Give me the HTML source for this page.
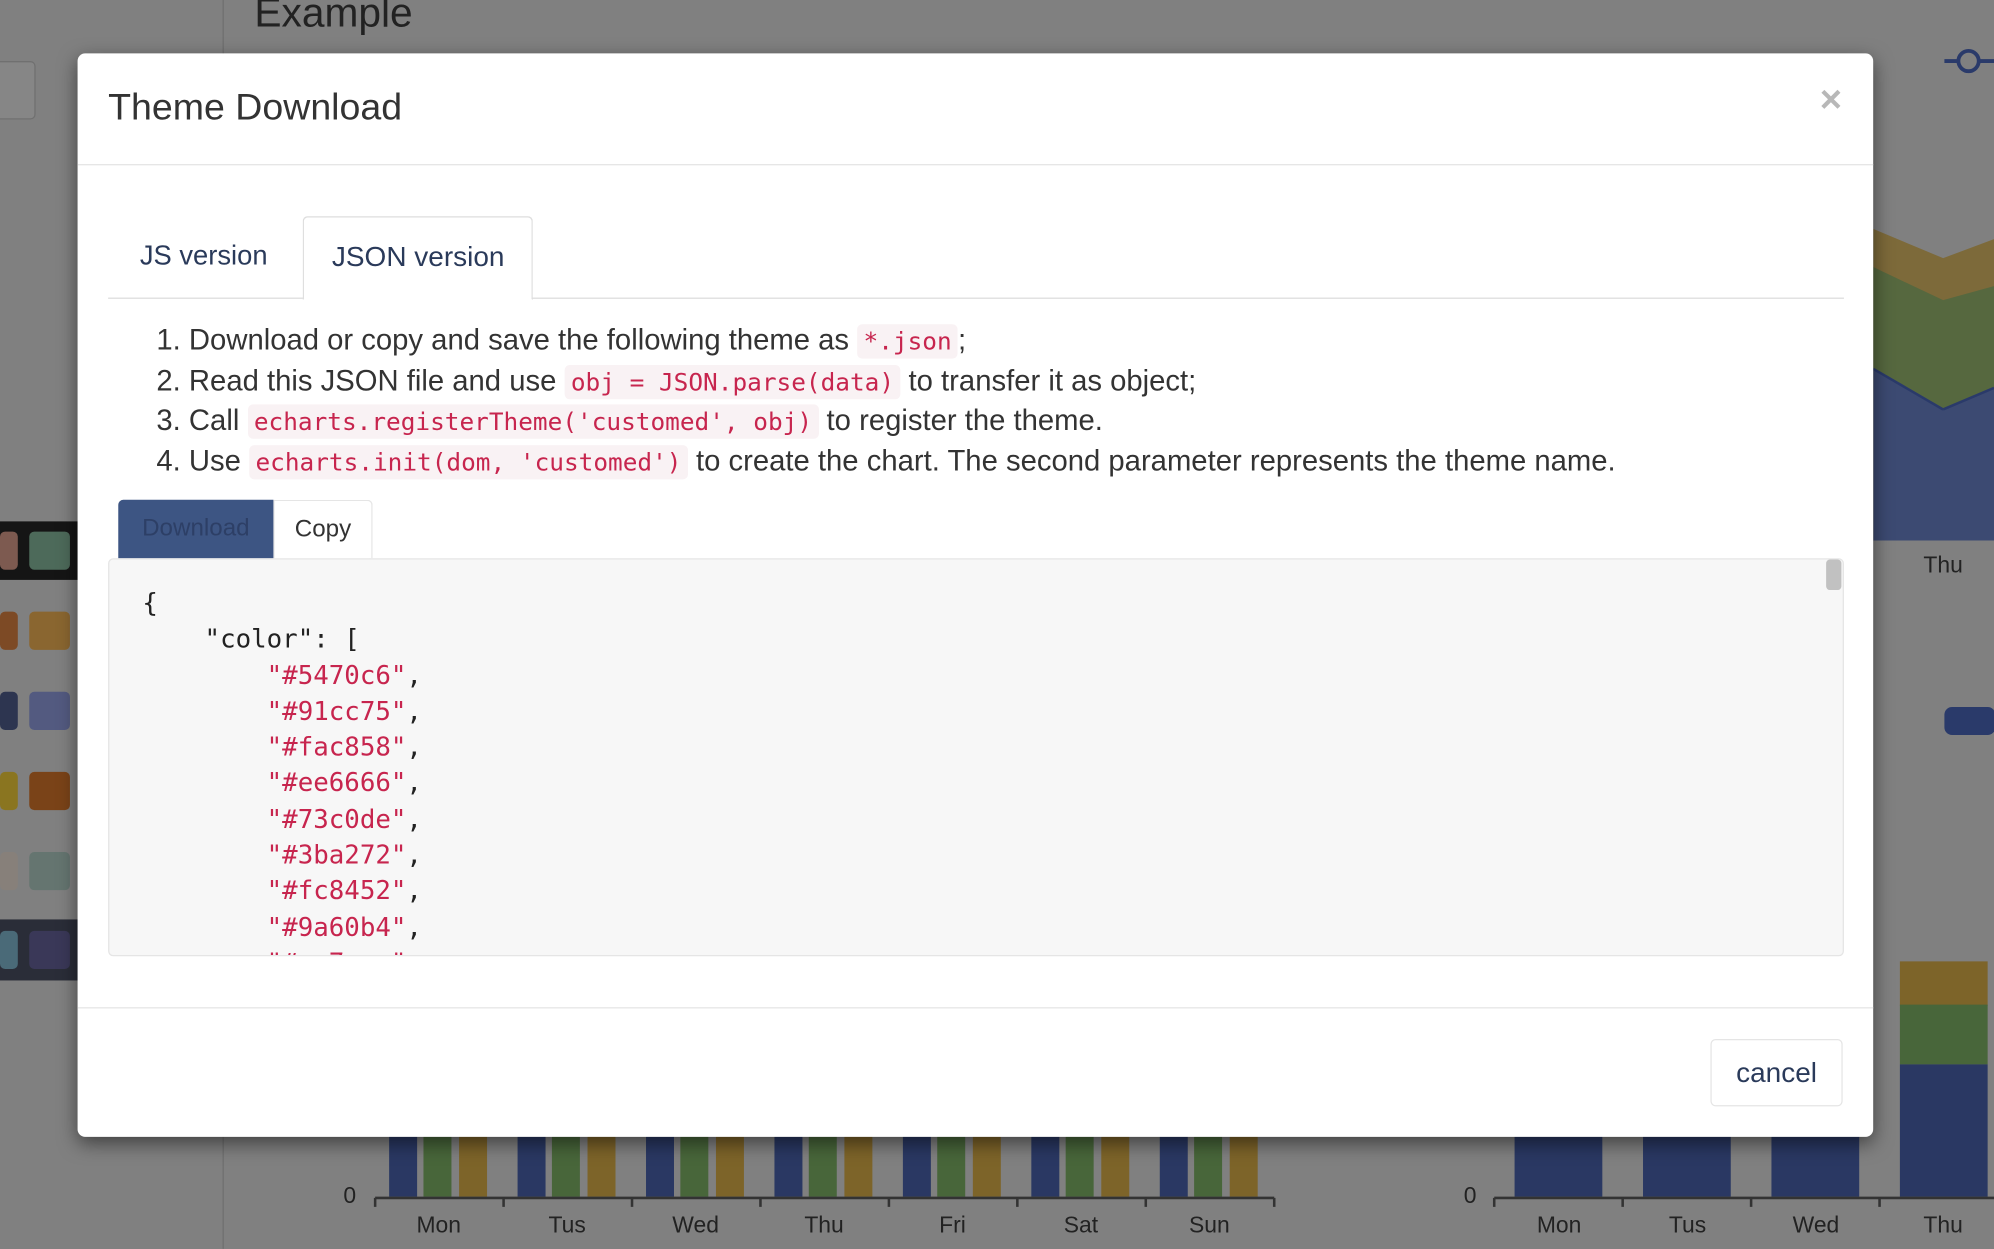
<!DOCTYPE html>
<html><head><meta charset="utf-8"><style>
*{box-sizing:border-box;margin:0;padding:0}
html,body{width:1994px;height:1248px;overflow:hidden;background:#808080}
#s{position:absolute;left:0;top:0;width:1568px;height:982px;transform:scale(1.271684);transform-origin:0 0;font-family:"Liberation Sans",sans-serif}
.a{position:absolute}
.mono{font-family:"DejaVu Sans Mono","Liberation Mono",monospace}
code{font-family:"DejaVu Sans Mono","Liberation Mono",monospace;font-size:19.2px;color:#c7254e;background:#f9f2f4;border-radius:4px;padding:2px 5px;line-height:20px}
.li{height:31.5px;line-height:31.5px}
.lab{position:absolute;font-size:18px;color:#222;transform:translateX(-50%)}
</style></head><body><div id="s">
<div class="a" style="left:175px;top:0;width:1px;height:982px;background:#6f6f6f"></div>
<div class="a" style="left:200px;top:-8px;font-size:32px;color:#222">Example</div>
<div class="a" style="left:-10px;top:48px;width:38px;height:46px;border:1px solid #707070;border-radius:4px;background:#868686"></div>
<div class="a" style="left:0;top:410px;width:62px;height:46px;background:#151515"></div>
<div class="a" style="left:0;top:418px;width:14px;height:30px;background:#7d5a50;border-radius:4px"></div>
<div class="a" style="left:23px;top:418px;width:32px;height:30px;background:#4d6a5a;border-radius:4px"></div>
<div class="a" style="left:0;top:481px;width:14px;height:30px;background:#7d4a25;border-radius:4px"></div>
<div class="a" style="left:23px;top:481px;width:32px;height:30px;background:#8a6630;border-radius:4px"></div>
<div class="a" style="left:0;top:544px;width:14px;height:30px;background:#2d3550;border-radius:4px"></div>
<div class="a" style="left:23px;top:544px;width:32px;height:30px;background:#535a80;border-radius:4px"></div>
<div class="a" style="left:0;top:607px;width:14px;height:30px;background:#8a7520;border-radius:4px"></div>
<div class="a" style="left:23px;top:607px;width:32px;height:30px;background:#7a4318;border-radius:4px"></div>
<div class="a" style="left:0;top:670px;width:14px;height:30px;background:#87807a;border-radius:4px"></div>
<div class="a" style="left:23px;top:670px;width:32px;height:30px;background:#657570;border-radius:4px"></div>
<div class="a" style="left:0;top:723px;width:62px;height:48px;background:#2a2d38"></div>
<div class="a" style="left:0;top:732px;width:14px;height:30px;background:#4a6a78;border-radius:4px"></div>
<div class="a" style="left:23px;top:732px;width:32px;height:30px;background:#3a3858;border-radius:4px"></div>
<svg class="a" style="left:1473px;top:0" width="95" height="982">
<line x1="56" y1="48" x2="95" y2="48" stroke="#2a3a6a" stroke-width="3"/><circle cx="75" cy="48" r="8" fill="#808080" stroke="#2a3a6a" stroke-width="3"/>
<path d="M0 180 L55 203 L95 188 L95 425 L0 425Z" fill="#7d6a3a"/>
<path d="M0 210 L55 236 L95 225 L95 425 L0 425Z" fill="#56683f"/>
<path d="M0 290 L55 322 L95 305 L95 425 L0 425Z" fill="#3c4a72"/>
<line x1="0" y1="290" x2="55" y2="322" stroke="#2a3a6a" stroke-width="2"/><line x1="55" y1="322" x2="95" y2="305" stroke="#2a3a6a" stroke-width="2"/>
<rect x="56" y="556" width="40" height="22" rx="6" fill="#2a3a6a"/>
<rect x="21" y="756" width="69" height="35" fill="#7d6429"/><rect x="21" y="790" width="69" height="47" fill="#48663a"/><rect x="21" y="837" width="69" height="104" fill="#2a3863"/>
</svg>
<div class="lab" style="left:1528px;top:434px">Thu</div>
<svg class="a" style="left:0;top:880px" width="1568" height="102">
<g fill="#2a3863"><rect x="306" y="0" width="22" height="61"/><rect x="407" y="0" width="22" height="61"/><rect x="508" y="0" width="22" height="61"/><rect x="609" y="0" width="22" height="61"/><rect x="710" y="0" width="22" height="61"/><rect x="811" y="0" width="22" height="61"/><rect x="912" y="0" width="22" height="61"/>
<rect x="1191" y="0" width="69" height="61"/><rect x="1292" y="0" width="69" height="61"/><rect x="1393" y="0" width="69" height="61"/></g>
<g fill="#48663a"><rect x="333" y="0" width="22" height="61"/><rect x="434" y="0" width="22" height="61"/><rect x="535" y="0" width="22" height="61"/><rect x="636" y="0" width="22" height="61"/><rect x="737" y="0" width="22" height="61"/><rect x="838" y="0" width="22" height="61"/><rect x="939" y="0" width="22" height="61"/></g>
<g fill="#7d6429"><rect x="361" y="0" width="22" height="61"/><rect x="462" y="0" width="22" height="61"/><rect x="563" y="0" width="22" height="61"/><rect x="664" y="0" width="22" height="61"/><rect x="765" y="0" width="22" height="61"/><rect x="866" y="0" width="22" height="61"/><rect x="967" y="0" width="22" height="61"/></g>
<g stroke="#333" stroke-width="2"><line x1="295" y1="62" x2="1002" y2="62"/><line x1="1175" y1="62" x2="1568" y2="62"/>
<line x1="295" y1="62" x2="295" y2="69"/><line x1="396" y1="62" x2="396" y2="69"/><line x1="497" y1="62" x2="497" y2="69"/><line x1="598" y1="62" x2="598" y2="69"/><line x1="699" y1="62" x2="699" y2="69"/><line x1="800" y1="62" x2="800" y2="69"/><line x1="901" y1="62" x2="901" y2="69"/><line x1="1002" y1="62" x2="1002" y2="69"/>
<line x1="1175" y1="62" x2="1175" y2="69"/><line x1="1276" y1="62" x2="1276" y2="69"/><line x1="1377" y1="62" x2="1377" y2="69"/><line x1="1478" y1="62" x2="1478" y2="69"/></g>
</svg>
<div class="a" style="left:270px;top:930px;font-size:18px;color:#222">0</div>
<div class="a" style="left:1151px;top:930px;font-size:18px;color:#222">0</div>
<div class="lab" style="left:345px;top:953px">Mon</div><div class="lab" style="left:446px;top:953px">Tus</div><div class="lab" style="left:547px;top:953px">Wed</div><div class="lab" style="left:648px;top:953px">Thu</div><div class="lab" style="left:749px;top:953px">Fri</div><div class="lab" style="left:850px;top:953px">Sat</div><div class="lab" style="left:951px;top:953px">Sun</div>
<div class="lab" style="left:1226px;top:953px">Mon</div><div class="lab" style="left:1327px;top:953px">Tus</div><div class="lab" style="left:1428px;top:953px">Wed</div><div class="lab" style="left:1528px;top:953px">Thu</div>

<div class="a" style="left:61px;top:42px;width:1412px;height:852px;background:#fff;border-radius:6px;box-shadow:0 5px 15px rgba(0,0,0,.5)">
  <div class="a" style="left:24px;top:26px;font-size:29.5px;color:#333">Theme Download</div>
  <div class="a" style="left:1370px;top:20px;font-size:30px;color:#b8b8b8;font-weight:bold">×</div>
  <div class="a" style="left:0;top:87px;width:1412px;height:1px;background:#e5e5e5"></div>
  <div class="a" style="left:24px;top:192px;width:1365px;height:1px;background:#ddd"></div>
  <div class="a" style="left:49px;top:147px;font-size:21.5px;color:#2a3a5a">JS version</div>
  <div class="a" style="left:177px;top:128px;width:181px;height:66px;background:#fff;border:1px solid #ddd;border-bottom-color:#fff;border-radius:4px 4px 0 0"></div>
  <div class="a" style="left:200px;top:147px;font-size:22px;color:#2a3a5a">JSON version</div>
  <div class="a" style="left:62px;top:210px;font-size:23px;color:#333;white-space:nowrap">
    <div class="li">1. Download or copy and save the following theme as <code>*.json</code>;</div>
    <div class="li">2. Read this JSON file and use <code>obj = JSON.parse(data)</code> to transfer it as object;</div>
    <div class="li">3. Call <code>echarts.registerTheme('customed', obj)</code> to register the theme.</div>
    <div class="li">4. Use <code>echarts.init(dom, 'customed')</code> to create the chart. The second parameter represents the theme name.</div>
  </div>
  <div class="a" style="left:32px;top:351px;width:122px;height:46px;background:#3d5583;border-radius:4px 0 0 0;color:#2d3f66;font-size:19px;text-align:center;line-height:46px">Download</div>
  <div class="a" style="left:154px;top:351px;width:78px;height:46px;background:#fff;border:1px solid #e5e5e5;border-bottom:none;border-radius:0 4px 0 0;color:#333;font-size:19px;text-align:center;line-height:46px">Copy</div>
  <div class="a mono" style="left:24px;top:397px;width:1365px;height:313px;background:#f7f7f7;border:1px solid #e5e5e5;border-radius:4px;overflow:hidden;font-size:20.3px;line-height:28.3px;color:#222;white-space:pre;padding:20px 0 0 26px">{
    "color": [
        <span style="color:#c7254e">"#5470c6"</span>,
        <span style="color:#c7254e">"#91cc75"</span>,
        <span style="color:#c7254e">"#fac858"</span>,
        <span style="color:#c7254e">"#ee6666"</span>,
        <span style="color:#c7254e">"#73c0de"</span>,
        <span style="color:#c7254e">"#3ba272"</span>,
        <span style="color:#c7254e">"#fc8452"</span>,
        <span style="color:#c7254e">"#9a60b4"</span>,
        <span style="color:#c7254e">"#ea7ccc"</span>
</div>
  <div class="a" style="left:1375px;top:398px;width:12px;height:24px;background:#c1c1c1;border-radius:3px"></div>
  <div class="a" style="left:0;top:750px;width:1412px;height:1px;background:#e5e5e5"></div>
  <div class="a" style="left:1284px;top:775px;width:104px;height:53px;border:1px solid #e5e5e5;border-radius:4px;font-size:22px;color:#2a3a5a;text-align:center;line-height:51px">cancel</div>
</div>
</div></body></html>
